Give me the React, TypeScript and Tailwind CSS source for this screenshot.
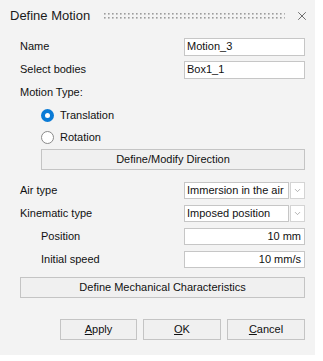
import { ChevronDown, X } from "lucide-react";

const Label = ({ children, indent = false }: { children: React.ReactNode; indent?: boolean }) => (
  <div className={`flex-1 ${indent ? "pl-[21px]" : ""}`}>{children}</div>
);

const TextBox = ({ value, right = false, h = "h-[18px]" }: { value: string; right?: boolean; h?: string }) => (
  <div
    className={`w-[121px] ${h} bg-white border border-[#c6c6c6] flex items-center px-[2px] ${
      right ? "justify-end pr-[3px]" : ""
    }`}
  >
    {value}
  </div>
);

const Select = ({ value }: { value: string }) => (
  <div className="flex w-[121px] h-[17px] gap-[1px]">
    <div className="flex-1 bg-white border border-[#c6c6c6] flex items-center px-[2px] whitespace-nowrap overflow-hidden">
      {value}
    </div>
    <div className="w-[15px] bg-white border border-[#d4d4d4] flex items-center justify-center">
      <ChevronDown className="w-[9px] h-[9px] text-[#9a9a9a]" strokeWidth={2} />
    </div>
  </div>
);

const Button = ({ children, className = "" }: { children: React.ReactNode; className?: string }) => (
  <div
    className={`h-[21px] bg-[#f0f0f0] border border-[#c4c4c4] flex items-center justify-center ${className}`}
  >
    {children}
  </div>
);

const Radio = ({ checked, label }: { checked: boolean; label: string }) => (
  <div className="h-[22px] flex items-center pl-[21px] gap-[6px]">
    {checked ? (
      <div className="w-[13px] h-[13px] rounded-full bg-[#0a7bd6] flex items-center justify-center">
        <div className="w-[5px] h-[5px] rounded-full bg-white" />
      </div>
    ) : (
      <div className="w-[13px] h-[13px] rounded-full border border-[#8a8a8a] bg-white" />
    )}
    <span>{label}</span>
  </div>
);

export default function App() {
  return (
    <div className="w-[323px] h-[361px] bg-white" style={{ fontFamily: '"Liberation Sans", Arial, sans-serif' }}>
      <div className="w-[315px] h-[355px] bg-[#f3f3f3] text-[11px] text-[#111]">
        {/* Title bar */}
        <div className="h-[32px] flex items-center pl-[10px] pr-[6px]">
          <span className="text-[13px] text-[#1a1a1a]">Define Motion</span>
          <svg className="ml-[14px] flex-1 h-[8px]" height="8">
            <defs>
              <pattern id="grip" width="4" height="4" patternUnits="userSpaceOnUse">
                <rect x="0" y="1" width="1.6" height="1.6" fill="#9c9c9c" />
              </pattern>
            </defs>
            <rect x="0" y="0" width="100%" height="8" fill="url(#grip)" />
          </svg>
          <X className="ml-[10px] w-[14px] h-[14px] text-[#505050]" strokeWidth={1.4} />
        </div>

        <div className="pl-[20px] pr-[10px] pt-[3px]">
          <div className="h-[23px] flex items-center">
            <Label>Name</Label>
            <TextBox value="Motion_3" />
          </div>
          <div className="h-[23px] flex items-center">
            <Label>Select bodies</Label>
            <TextBox value="Box1_1" />
          </div>
          <div className="h-[23px] flex items-center">Motion Type:</div>
          <Radio checked label="Translation" />
          <Radio checked={false} label="Rotation" />
          <div className="pl-[21px] mt-[1px]">
            <Button className="h-[20px]">Define/Modify Direction</Button>
          </div>

          <div className="mt-[9px] h-[23px] flex items-center">
            <Label>Air type</Label>
            <Select value="Immersion in the air" />
          </div>
          <div className="h-[23px] flex items-center">
            <Label>Kinematic type</Label>
            <Select value="Imposed position" />
          </div>
          <div className="h-[23px] flex items-center">
            <Label indent>Position</Label>
            <TextBox value="10 mm" right h="h-[17px]" />
          </div>
          <div className="h-[23px] flex items-center">
            <Label indent>Initial speed</Label>
            <TextBox value="10 mm/s" right h="h-[17px]" />
          </div>

          <Button className="mt-[6px]">Define Mechanical Characteristics</Button>

          <div className="mt-[21px] flex justify-end gap-[6px]">
            <Button className="w-[77px]">
              <span className="underline">A</span>pply
            </Button>
            <Button className="w-[78px]">
              <span className="underline">O</span>K
            </Button>
            <Button className="w-[78px]">
              <span className="underline">C</span>ancel
            </Button>
          </div>
        </div>
      </div>
    </div>
  );
}
